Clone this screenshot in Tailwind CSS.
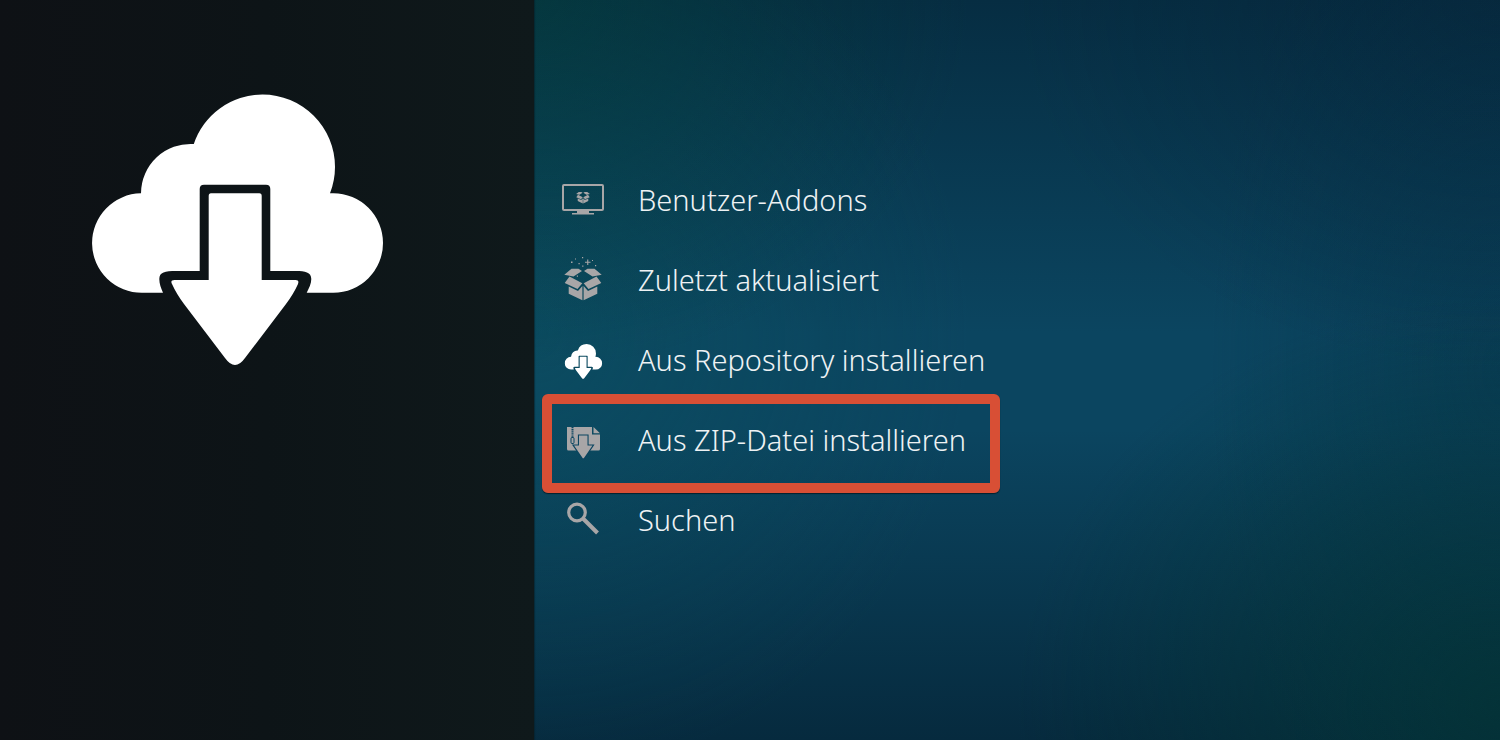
<!DOCTYPE html>
<html lang="de">
<head>
    <meta charset="UTF-8">
    <meta name="viewport" content="width=device-width, initial-scale=1.0">
    <title>Addons</title>
    <script src="https://cdn.jsdelivr.net/npm/@tailwindcss/browser@4"></script>
</head>
<body class="flex min-h-screen bg-[#0b4560] font-['Noto_Sans','Open_Sans',sans-serif] text-[#eef2f4]">

    <!-- Symbole -->
    <svg class="hidden" aria-hidden="true">
        <symbol id="cloud" viewBox="92 94 292 272">
            <path d="M163 292.7H142.5A49.7 49.7 0 0 1 141 193.3A49.5 49.5 0 0 1 193.8 144A72.5 72.5 0 0 1 262.5 94.5A72.5 72.5 0 0 1 335 167A72.5 72.5 0 0 1 330 193.3H333.3A49.7 49.7 0 0 1 383 243A49.7 49.7 0 0 1 333.3 292.7H306.7C309 288 311.3 284 311.3 279C311.3 272 305 271 296 271H270.3V189Q270.3 184.7 266 184.7H204Q199.7 184.7 199.7 189V271H176C165 271 159.3 272 159.3 279C159.3 284 161 288 163 292.7Z"/>
            <path d="M211 193.3H259.4Q261.7 193.3 261.7 196V280H295.5Q299.5 280 298 284C295 291 291 297 286 304L245 358Q240 365 235 365Q230 365 225 358L184 304C179 297 175 291 172 284Q170 280 174.5 280H208.7V196Q208.7 193.3 211 193.3Z"/>
        </symbol>
        <symbol id="box" viewBox="6 12 38 34">
            <path d="M6.3 19.7L13.5 13.8L20.5 13.8L24 16L15.5 21.5ZM43.7 19.7L36.5 13.8L29.5 13.8L26 16L34.5 21.5ZM11.5 21.5L24.3 28.2L19.5 34L6.7 28ZM38.5 21.5L25.7 28.2L30.5 34L43.3 28ZM10.7 31.5L20 36L24.4 31V45.3L10.7 38.8ZM39.3 31.5L30 36L25.6 31V45.3L39.3 38.8Z"/>
        </symbol>
    </svg>

    <aside class="w-[35.6%] shrink-0 bg-linear-to-r from-[#0e1115] via-[#0d1417] to-[#0f191b] pt-[94px] pl-[92px]">
        <svg class="h-[272px] w-[292px] fill-white"><use href="#cloud"/></svg>
    </aside>

    <main class="flex-1 bg-[radial-gradient(ellipse_50%_50%_at_100%_0%,#06203566,transparent),radial-gradient(ellipse_50%_55%_at_100%_95%,#033434bb,transparent),radial-gradient(ellipse_45%_50%_at_0%_0%,#033c3888,transparent),radial-gradient(ellipse_45%_60%_at_0%_45%,#0b506088,transparent),radial-gradient(ellipse_30%_75%_at_100%_50%,#06344a88,transparent),linear-gradient(to_bottom,#062d42,transparent_45%,transparent_58%,#062a3e)] pt-40 shadow-[inset_2px_0_1px_-1px_#06202a99]">
        <ul class="text-[29px] font-[350]">
            <li>
                <a href="#" class="flex h-20 w-fit items-center gap-[30px] pr-[34px] pl-6">
                    <svg class="size-[50px] fill-[#a8a6a7]" viewBox="0 0 50 50">
                        <rect x="5" y="10" width="40" height="25" rx="1" fill="none" stroke="#a8a6a7" stroke-width="2"/>
                        <path d="M19 36H31V38H36V39.5H14V38H19Z"/>
                        <use href="#box" x="18" y="16" width="14" height="13"/>
                    </svg>
                    Benutzer-Addons
                </a>
            </li>
            <li>
                <a href="#" class="flex h-20 w-fit items-center gap-[30px] pr-[34px] pl-6">
                    <svg class="size-[50px] fill-[#a8a6a7]" viewBox="0 0 50 50">
                        <use href="#box" x="6" y="12" width="38" height="34"/>
                        <path d="M29.2 4.5H30.3V6.7H32.5V7.8H30.3V10H29.2V7.8H27V6.7H29.2Z"/>
                        <path d="M13 6.5H14.5V8H13ZM24 2H25.2V3.2H24ZM37 10H38.2V11.2H37ZM20.5 8H21.7V9.2H20.5ZM18.8 20.5H20V21.7H18.8ZM24.2 10.5H25.4V11.7H24.2ZM17 3.5H18V4.5H17ZM34 5H35V6H34Z"/>
                    </svg>
                    Zuletzt aktualisiert
                </a>
            </li>
            <li>
                <a href="#" class="flex h-20 w-fit items-center gap-[30px] pr-[34px] pl-6">
                    <svg class="size-[50px] fill-white" viewBox="0 0 50 50">
                        <use href="#cloud" x="6.5" y="9" width="38" height="35"/>
                    </svg>
                    Aus Repository installieren
                </a>
            </li>
            <li class="relative w-fit">
                <a href="#" class="flex h-20 items-center gap-[30px] pr-[34px] pl-6">
                    <svg class="size-[50px] fill-[#a8a6a7]" viewBox="0 0 50 50">
                        <path d="M9 12H34V19.5H42V34Q42 35.5 40.5 35.5H10.5Q9 35.5 9 34ZM35.5 12L42 18.3H35.5Z"/>
                        <path d="M14.5 12V26" fill="none" stroke="#0b4560" stroke-width="2" stroke-dasharray="1.3 .8"/>
                        <rect x="13" y="22.5" width="3" height="6" rx="1" stroke="#0b4560"/>
                        <path d="M21 20.5H29.5V30.5H34.5L25.8 43.3H24.8L16 30.5H21Z" stroke="#0b4560" stroke-width="2.2" paint-order="stroke"/>
                    </svg>
                    Aus ZIP-Datei installieren
                </a>
                <!-- Markierung -->
                <div class="pointer-events-none absolute -top-1.5 right-0 -bottom-[13px] left-2 rounded-md border-10 border-[#d84f35] shadow-[0_1px_1px_#04202c]"></div>
            </li>
            <li>
                <a href="#" class="flex h-20 w-fit items-center gap-[30px] pr-[34px] pl-6">
                    <svg class="size-[50px]" viewBox="0 0 50 50" fill="none" stroke="#a8a6a7">
                        <circle cx="19" cy="17.5" r="8.3" stroke-width="3.2"/>
                        <path d="M25 23.5L39.5 38" stroke-width="4"/>
                    </svg>
                    Suchen
                </a>
            </li>
        </ul>
    </main>

</body>
</html>
